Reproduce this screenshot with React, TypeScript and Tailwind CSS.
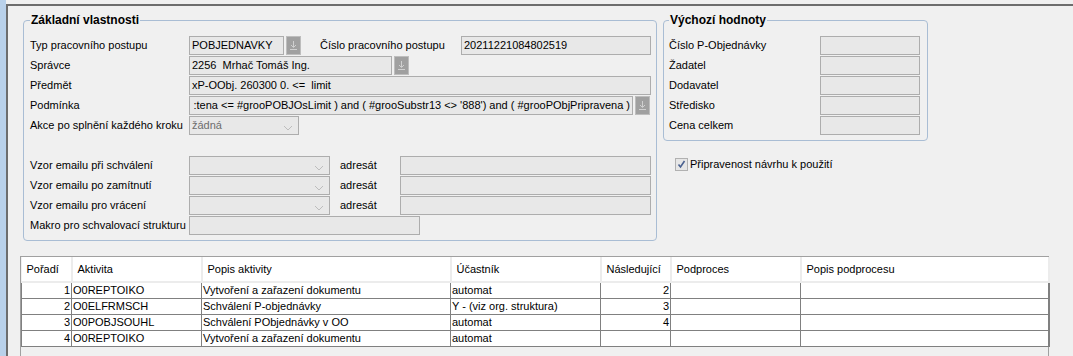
import React from 'react';

const fieldCls = 'h-[19px] border border-[#adadad] bg-[#e8e8e8] px-[2px] leading-[17px] whitespace-pre overflow-hidden';

const Field: React.FC<{ w: string; value?: string }> = ({ w, value }) => (
    <div className={`${fieldCls} ${w}`}>{value}</div>
);

const PickButton: React.FC = () => (
    <div className="ml-[2px] w-[15px] h-[19px] bg-[#a0a0a0] border border-[#bdbdbd] flex items-center justify-center">
        <svg width="9" height="11" viewBox="0 0 9 11">
            <path d="M4.5 1 V7" stroke="#d0d0d0" strokeWidth="1" />
            <path d="M2 5 L4.5 7.5 L7 5" stroke="#d0d0d0" strokeWidth="1" fill="none" />
            <path d="M1 9.5 H8" stroke="#d0d0d0" strokeWidth="1" />
        </svg>
    </div>
);

const Combo: React.FC<{ w: string; value?: string }> = ({ w, value }) => (
    <div className={`${fieldCls} ${w} bg-[#e1e1e1] flex items-center justify-between text-[#6d6d6d]`}>
        <span>{value}</span>
        <svg width="10" height="6" viewBox="0 0 10 6" className="mr-[3px] mt-[4px]">
            <path d="M1 1 L5 5 L9 1" stroke="#bdbdbd" strokeWidth="1" fill="none" />
        </svg>
    </div>
);

const Row: React.FC<{ children: React.ReactNode }> = ({ children }) => (
    <div className="flex items-center h-[19px]">{children}</div>
);

const Label: React.FC<{ w: string; children: React.ReactNode }> = ({ w, children }) => (
    <div className={`${w} shrink-0 leading-[19px] whitespace-nowrap`}>{children}</div>
);

interface Step {
    poradi: number;
    aktivita: string;
    popis: string;
    ucastnik: string;
    nasledujici: string;
}

const steps: Step[] = [
    { poradi: 1, aktivita: 'O0REPTOIKO', popis: 'Vytvoření a zařazení dokumentu', ucastnik: 'automat', nasledujici: '2' },
    { poradi: 2, aktivita: 'O0ELFRMSCH', popis: 'Schválení P-objednávky', ucastnik: 'Y - (viz org. struktura)', nasledujici: '3' },
    { poradi: 3, aktivita: 'O0POBJSOUHL', popis: 'Schválení PObjednávky v OO', ucastnik: 'automat', nasledujici: '4' },
    { poradi: 4, aktivita: 'O0REPTOIKO', popis: 'Vytvoření a zařazení dokumentu', ucastnik: 'automat', nasledujici: '' },
];

const headers = ['Pořadí', 'Aktivita', 'Popis aktivity', 'Účastník', 'Následující', 'Podproces', 'Popis podprocesu'];
const widths = ['w-[50px]', 'w-[130px]', 'w-[249px]', 'w-[150px]', 'w-[70px]', 'w-[130px]', 'w-[248px]'];

const App: React.FC = () => {
    return (
        <div className="w-[1073px] h-[356px] overflow-hidden flex bg-[#f0f0f0] text-[11px] text-black font-['Liberation_Sans',Arial,sans-serif]">
            {/* levý pruh */}
            <div className="w-[6px] h-full bg-[#b9d1ea]" />

            <div className="flex-1 pt-[4px] flex flex-col">
                <div className="flex-1 border-l-2 border-t-2 border-[#6d6d6d] flex flex-col">
                    {/* horní část */}
                    <div className="flex items-start">
                        <fieldset className="ml-[15px] mt-[7px] w-[634px] border border-[#a9bdd4] rounded-[4px] pl-[6px] pr-[5px] pt-[9px] pb-[5px]">
                            <legend className="px-[1px] font-bold text-[12px] leading-[14px]">Základní vlastnosti</legend>
                            <div className="flex flex-col gap-[1px]">
                                <Row>
                                    <Label w="w-[159px]">Typ pracovního postupu</Label>
                                    <Field w="w-[95px]" value="POBJEDNAVKY" />
                                    <PickButton />
                                    <Label w="w-[141px] ml-[19px]">Číslo pracovního postupu</Label>
                                    <Field w="w-[190px]" value="20211221084802519" />
                                </Row>
                                <Row>
                                    <Label w="w-[159px]">Správce</Label>
                                    <Field w="w-[203px]" value="2256  Mrhač Tomáš Ing." />
                                    <PickButton />
                                </Row>
                                <Row>
                                    <Label w="w-[159px]">Předmět</Label>
                                    <Field w="w-[462px]" value="xP-OObj. 260300 0. <=  limit" />
                                </Row>
                                <Row>
                                    <Label w="w-[159px]">Podmínka</Label>
                                    <div className={`${fieldCls} w-[444px] flex justify-end`}>
                                        <span>:tena &lt;= #grooPOBJOsLimit ) and ( #grooSubstr13 &lt;&gt; '888') and ( #grooPObjPripravena )</span>
                                    </div>
                                    <PickButton />
                                </Row>
                                <Row>
                                    <Label w="w-[159px]">Akce po splnění každého kroku</Label>
                                    <Combo w="w-[110px]" value="žádná" />
                                </Row>
                                <Row>
                                    <span />
                                </Row>
                                {['Vzor emailu při schválení', 'Vzor emailu po zamítnutí', 'Vzor emailu pro vrácení'].map((l) => (
                                    <Row key={l}>
                                        <Label w="w-[159px]">{l}</Label>
                                        <Combo w="w-[141px]" />
                                        <Label w="w-[70px] pl-[10px]">adresát</Label>
                                        <Field w="w-[251px]" />
                                    </Row>
                                ))}
                                <Row>
                                    <Label w="w-[159px]">Makro pro schvalovací strukturu</Label>
                                    <Field w="w-[231px]" />
                                </Row>
                            </div>
                        </fieldset>

                        <div className="ml-[6px] flex flex-col">
                            <fieldset className="mt-[7px] w-[264px] border border-[#a9bdd4] rounded-[4px] pl-[5px] pr-[7px] pt-[9px] pb-[5px]">
                                <legend className="px-[1px] font-bold text-[12px] leading-[14px]">Výchozí hodnoty</legend>
                                <div className="flex flex-col gap-[1px]">
                                    {['Číslo P-Objednávky', 'Žadatel', 'Dodavatel', 'Středisko', 'Cena celkem'].map((l) => (
                                        <Row key={l}>
                                            <Label w="w-[151px]">{l}</Label>
                                            <Field w="w-[100px]" />
                                        </Row>
                                    ))}
                                </div>
                            </fieldset>
                            <div className="mt-[16px] ml-[12px] flex items-center gap-[2px]">
                                <div className="w-[13px] h-[13px] border border-[#b1b1b1] bg-[#e6e6e6] flex items-center justify-center">
                                    <svg width="9" height="9" viewBox="0 0 9 9">
                                        <path d="M1.5 4.5 L3.5 7 L7.5 1" stroke="#4a6190" strokeWidth="1.6" fill="none" />
                                    </svg>
                                </div>
                                <span className="leading-[14px]">Připravenost návrhu k použití</span>
                            </div>
                        </div>
                    </div>

                    {/* tabulka */}
                    <div className="mt-[15px] ml-[12px] w-[1029px] flex-1 border-l border-t border-r border-[#a0a0a0] bg-[#f0f0f0]">
                        <table className="table-fixed border-collapse w-[1027px]">
                            <thead>
                                <tr className="bg-white">
                                    {headers.map((h, i) => (
                                        <th
                                            key={h}
                                            className={`${widths[i]} h-[25px] p-0 pl-[5px] text-left font-normal whitespace-nowrap border-r-2 border-b-2 border-[#ececec]`}
                                        >
                                            {h}
                                        </th>
                                    ))}
                                </tr>
                            </thead>
                            <tbody>
                                {steps.map((s) => (
                                    <tr key={s.poradi} className="bg-white">
                                        <td className="h-[16px] p-0 pr-[1px] text-right leading-[14px] border border-[#808080]">{s.poradi}</td>
                                        <td className="h-[16px] p-0 pl-[1px] leading-[14px] border border-[#808080] whitespace-nowrap">{s.aktivita}</td>
                                        <td className="h-[16px] p-0 pl-[1px] leading-[14px] border border-[#808080] whitespace-nowrap">{s.popis}</td>
                                        <td className="h-[16px] p-0 pl-[1px] leading-[14px] border border-[#808080] whitespace-nowrap">{s.ucastnik}</td>
                                        <td className="h-[16px] p-0 pr-[1px] text-right leading-[14px] border border-[#808080]">{s.nasledujici}</td>
                                        <td className="h-[16px] p-0 border border-[#808080]" />
                                        <td className="h-[16px] p-0 border border-[#808080] border-r-2" />
                                    </tr>
                                ))}
                            </tbody>
                        </table>
                    </div>
                </div>
            </div>
        </div>
    );
};

export default App;
